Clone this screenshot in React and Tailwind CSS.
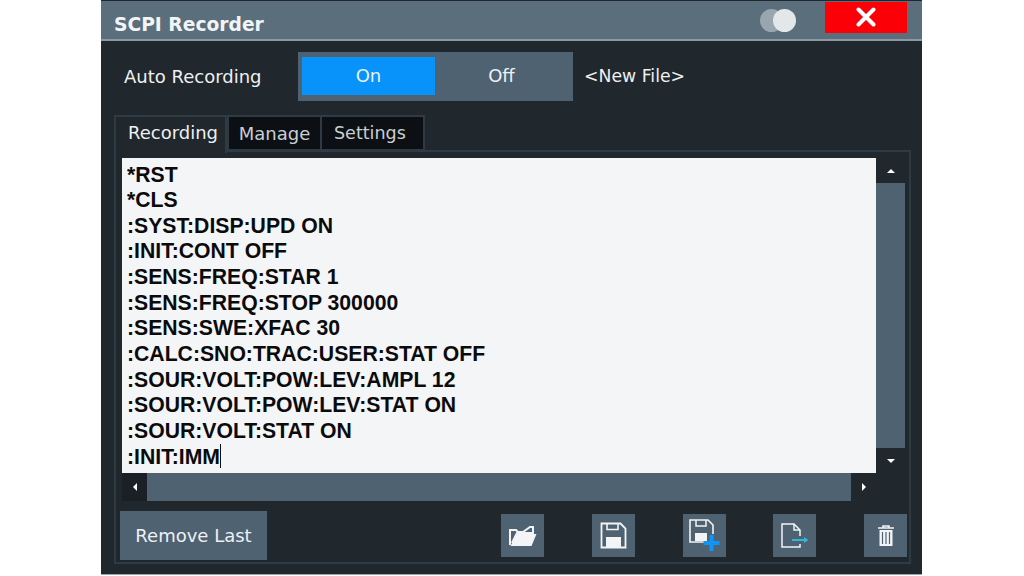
import React from 'react';

const LINES = [
  '*RST',
  '*CLS',
  ':SYST:DISP:UPD ON',
  ':INIT:CONT OFF',
  ':SENS:FREQ:STAR 1',
  ':SENS:FREQ:STOP 300000',
  ':SENS:SWE:XFAC 30',
  ':CALC:SNO:TRAC:USER:STAT OFF',
  ':SOUR:VOLT:POW:LEV:AMPL 12',
  ':SOUR:VOLT:POW:LEV:STAT ON',
  ':SOUR:VOLT:STAT ON',
  ':INIT:IMM',
];

const IconButton = ({ children }) => (
  <button className="w-[43px] h-[43px] bg-[#4f6272] flex items-center justify-center">
    {children}
  </button>
);

const FolderIcon = () => (
  <svg width="28" height="22" viewBox="0 0 28 22">
    <path d="M1 20V5h6l2 2h5l7-5h3v6H8L3 18" fill="none" stroke="#f2f4f5" strokeWidth="2" />
    <path d="M8 9h19.500l-5 12H1.500z" fill="#f2f4f5" />
  </svg>
);

const SaveIcon = () => (
  <svg width="27" height="27" viewBox="0 0 27 27">
    <path d="M1.500 1.500h19l5 5v19h-24z" fill="none" stroke="#f2f4f5" strokeWidth="1.800" />
    <path d="M7 1.500v6h11v-6" fill="none" stroke="#f2f4f5" strokeWidth="1.600" />
    <rect x="6" y="15" width="15" height="10" fill="#f2f4f5" />
  </svg>
);

const SavePlusIcon = () => (
  <svg width="32" height="33" viewBox="0 0 32 33">
    <path d="M15 23H1V1h18l5 5v9" fill="none" stroke="#f2f4f5" strokeWidth="1.600" />
    <path d="M7 1v6h10V1" fill="none" stroke="#f2f4f5" strokeWidth="1.500" />
    <rect x="6" y="14" width="12" height="8" fill="#f2f4f5" />
    <path d="M22.500 16v16M14.500 24h16" stroke="#0f95f5" strokeWidth="4" />
  </svg>
);

const ExportIcon = () => (
  <svg width="28" height="25" viewBox="0 0 28 25">
    <path d="M19 13V7l-6-6H1v23h18v-3" fill="none" stroke="#f2f4f5" strokeWidth="1.500" />
    <path d="M13 1v6h6" fill="none" stroke="#f2f4f5" strokeWidth="1.500" />
    <path d="M11 17h13" stroke="#35b4dc" strokeWidth="2" />
    <path d="M23 14l4.500 3-4.500 3z" fill="#35b4dc" />
  </svg>
);

const TrashIcon = () => (
  <svg width="16" height="21" viewBox="0 0 16 21">
    <path d="M0 3h16M5 3V1h6v2" fill="none" stroke="#f2f4f5" strokeWidth="1.600" />
    <path d="M1.500 5h13v16h-13z" fill="#f2f4f5" />
    <path d="M4.500 7v12M8 7v12M11.500 7v12" stroke="#4f6272" strokeWidth="1.200" />
  </svg>
);

export default function App() {
  return (
    <div className="w-[1024px] h-[576px] bg-white overflow-hidden" style={{ fontFamily: '"DejaVu Sans", sans-serif' }}>
      <div className="ml-[101px] w-[821px] h-[575px] bg-[#20272d] flex flex-col border-b border-[#9aa5ac]">
        {/* title bar */}
        <div className="h-[40px] mt-px bg-[#5a6e7c] border-b-2 border-[#8a99a3] flex items-center pl-[13px] pr-[15px] shrink-0">
          <span className="text-[18.700px] font-bold text-[#f2f4f5] mt-[10px]">SCPI Recorder</span>
          <div className="ml-auto flex items-center gap-[29px]">
            <div className="relative w-[36px] h-[23px]">
              <div className="absolute left-0 top-0 w-[23px] h-[23px] rounded-full bg-[#9aa6ad]" />
              <div className="absolute right-0 top-0 w-[23px] h-[23px] rounded-full bg-[#e4e7e9]" />
            </div>
            <button className="w-[82px] h-[31px] mb-[6px] bg-[#fb0007] flex items-center justify-center">
              <svg width="20" height="20" viewBox="0 0 20 20">
                <path d="M2.500 2.500l15 15M17.500 2.500l-15 15" stroke="#fff" strokeWidth="4" strokeLinecap="round" />
              </svg>
            </button>
          </div>
        </div>

        {/* auto recording row */}
        <div className="flex items-center mt-[11px] pl-[23px] h-[49px] shrink-0 text-[18px] text-[#eef0f2]">
          <span className="w-[174px]">Auto Recording</span>
          <div className="w-[275px] h-[49px] bg-[#4f6272] flex items-center pl-[4px]">
            <div className="w-[133px] h-[38px] bg-[#0893fb] flex items-center justify-center -mt-px pb-px">On</div>
            <div className="w-[133px] text-center -mt-[2px]">Off</div>
          </div>
          <span className="ml-[11px] text-[17.300px]">&lt;New File&gt;</span>
        </div>

        {/* tabs */}
        <div className="flex mt-[14px] ml-[13px] h-[36px] shrink-0 text-[18px]">
          <div className="w-[113px] border-t-2 border-x-2 border-[#2e3a44] bg-[#20272d] text-[#eef0f2] flex items-center pl-[12px] pb-[6px] -mb-[2px] z-10">Recording</div>
          <div className="w-[95px] bg-[#0c1014] border-2 border-[#2e3a44] text-[#c9ced2] flex items-center justify-center">Manage</div>
          <div className="w-[103px] bg-[#0c1014] border-2 border-l-0 border-[#2e3a44] text-[#c9ced2] text-[17.500px] flex items-center pl-[12px]">Settings</div>
        </div>

        {/* tab panel */}
        <div className="ml-[13px] w-[797px] h-[414px] border-2 border-[#2e3a44] shrink-0 -mt-[1px] pt-[6px] pl-[6px] flex flex-col">
          <div className="flex h-[315px]">
            <div className="w-[754px] bg-[#f4f5f7] pl-[5px] pt-[3.500px] shrink-0" style={{ fontFamily: '"Liberation Sans", Arial, sans-serif' }}>
              {LINES.map((line, i) => (
                <div key={i} className="h-[25.650px] leading-[25.650px] text-[21.200px] font-bold text-[#0b0b0b] whitespace-pre flex items-center">
                  {line}
                  {i === LINES.length - 1 && <span className="inline-block w-px h-[24px] bg-[#111]" />}
                </div>
              ))}
            </div>
            <div className="w-[29px] flex flex-col items-stretch">
              <div className="h-[25px] flex items-center justify-center">
                <div className="w-0 h-0 border-x-[4px] border-x-transparent border-b-[4px] border-b-white" />
              </div>
              <div className="flex-1 bg-[#4f6272]" />
              <div className="h-[25px] flex items-center justify-center">
                <div className="w-0 h-0 border-x-[4px] border-x-transparent border-t-[4px] border-t-white" />
              </div>
            </div>
          </div>
          <div className="flex h-[28px] w-[754px]">
            <div className="w-[25px] bg-[#1a2026] flex items-center justify-center">
              <div className="w-0 h-0 border-y-[4px] border-y-transparent border-r-[4px] border-r-white" />
            </div>
            <div className="flex-1 bg-[#4f6272]" />
            <div className="w-[25px] flex items-center justify-center">
              <div className="w-0 h-0 border-y-[4px] border-y-transparent border-l-[4px] border-l-white" />
            </div>
          </div>

          {/* bottom buttons */}
          <div className="flex items-center mt-[10px] -ml-[2px] h-[49px]">
            <button className="w-[147px] h-[49px] bg-[#4f6272] text-[#eef0f2] text-[18px]">Remove Last</button>
            <div className="ml-[234px] mr-[48px]"><IconButton><FolderIcon /></IconButton></div>
            <div className="mr-[48px]"><IconButton><SaveIcon /></IconButton></div>
            <div className="mr-[47px]"><IconButton><SavePlusIcon /></IconButton></div>
            <div className="mr-[48px]"><IconButton><ExportIcon /></IconButton></div>
            <IconButton><TrashIcon /></IconButton>
          </div>
        </div>
      </div>
    </div>
  );
}
